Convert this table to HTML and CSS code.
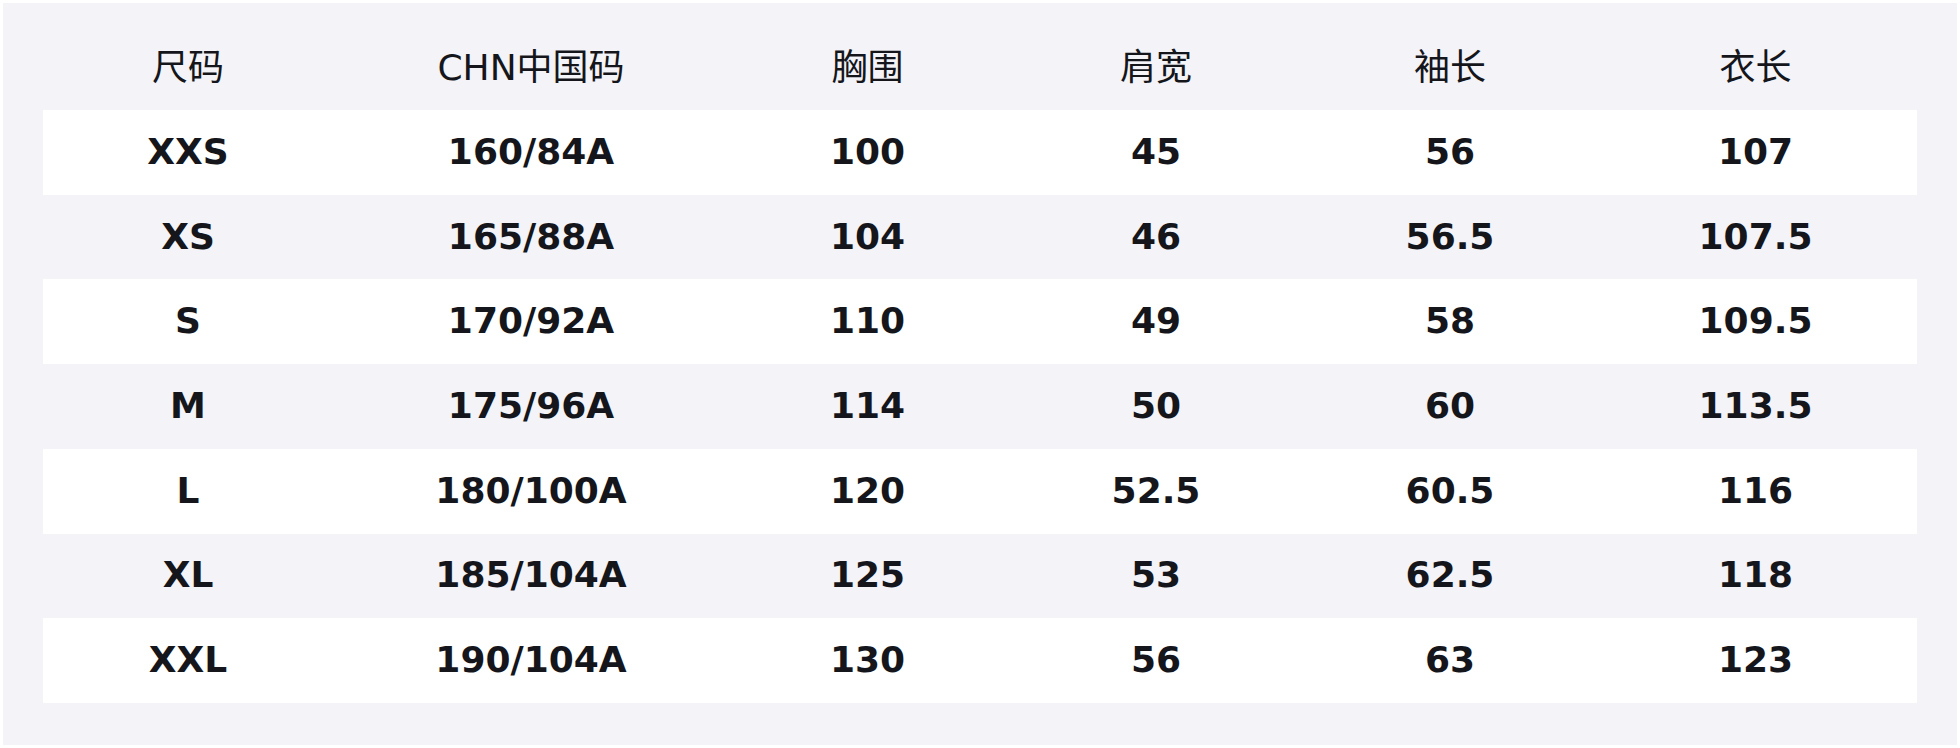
FILE: index.html
```html
<!DOCTYPE html>
<html lang="zh">
<head>
<meta charset="utf-8">
<link rel="stylesheet" href="styles.css">
</head>
<body>
<div class="panel">
  <div class="row head">
    <div>尺码</div><div>CHN中国码</div><div>胸围</div><div>肩宽</div><div>袖长</div><div>衣长</div>
  </div>
  <div class="row odd"><div>XXS</div><div>160/84A</div><div>100</div><div>45</div><div>56</div><div>107</div></div>
  <div class="row"><div>XS</div><div>165/88A</div><div>104</div><div>46</div><div>56.5</div><div>107.5</div></div>
  <div class="row odd"><div>S</div><div>170/92A</div><div>110</div><div>49</div><div>58</div><div>109.5</div></div>
  <div class="row"><div>M</div><div>175/96A</div><div>114</div><div>50</div><div>60</div><div>113.5</div></div>
  <div class="row odd"><div>L</div><div>180/100A</div><div>120</div><div>52.5</div><div>60.5</div><div>116</div></div>
  <div class="row"><div>XL</div><div>185/104A</div><div>125</div><div>53</div><div>62.5</div><div>118</div></div>
  <div class="row odd"><div>XXL</div><div>190/104A</div><div>130</div><div>56</div><div>63</div><div>123</div></div>
</div>
</body>
</html>
```
FILE: styles.css
```css
html, body {
  margin: 0;
  padding: 0;
  background: #ffffff;
}
body {
  padding: 3px;
  font-family: "DejaVu Sans", "Noto Sans CJK SC", sans-serif;
  color: #15161b;
}
.panel {
  width: 1954px;
  height: 742px;
  box-sizing: border-box;
  background: #f3f3f8;
  padding: 20px 40px 0 40px;
}
.row {
  display: grid;
  grid-template-columns: 290px 396px 277px 300px 288px 323px;
  height: 84.72px;
  box-sizing: border-box;
  padding-bottom: 2px;
  align-items: center;
  text-align: center;
  font-size: 36px;
  font-weight: bold;
}
.row.head {
  height: 87px;
  font-weight: normal;
  padding-bottom: 6px;
}
.row.odd {
  background: #ffffff;
}
```
